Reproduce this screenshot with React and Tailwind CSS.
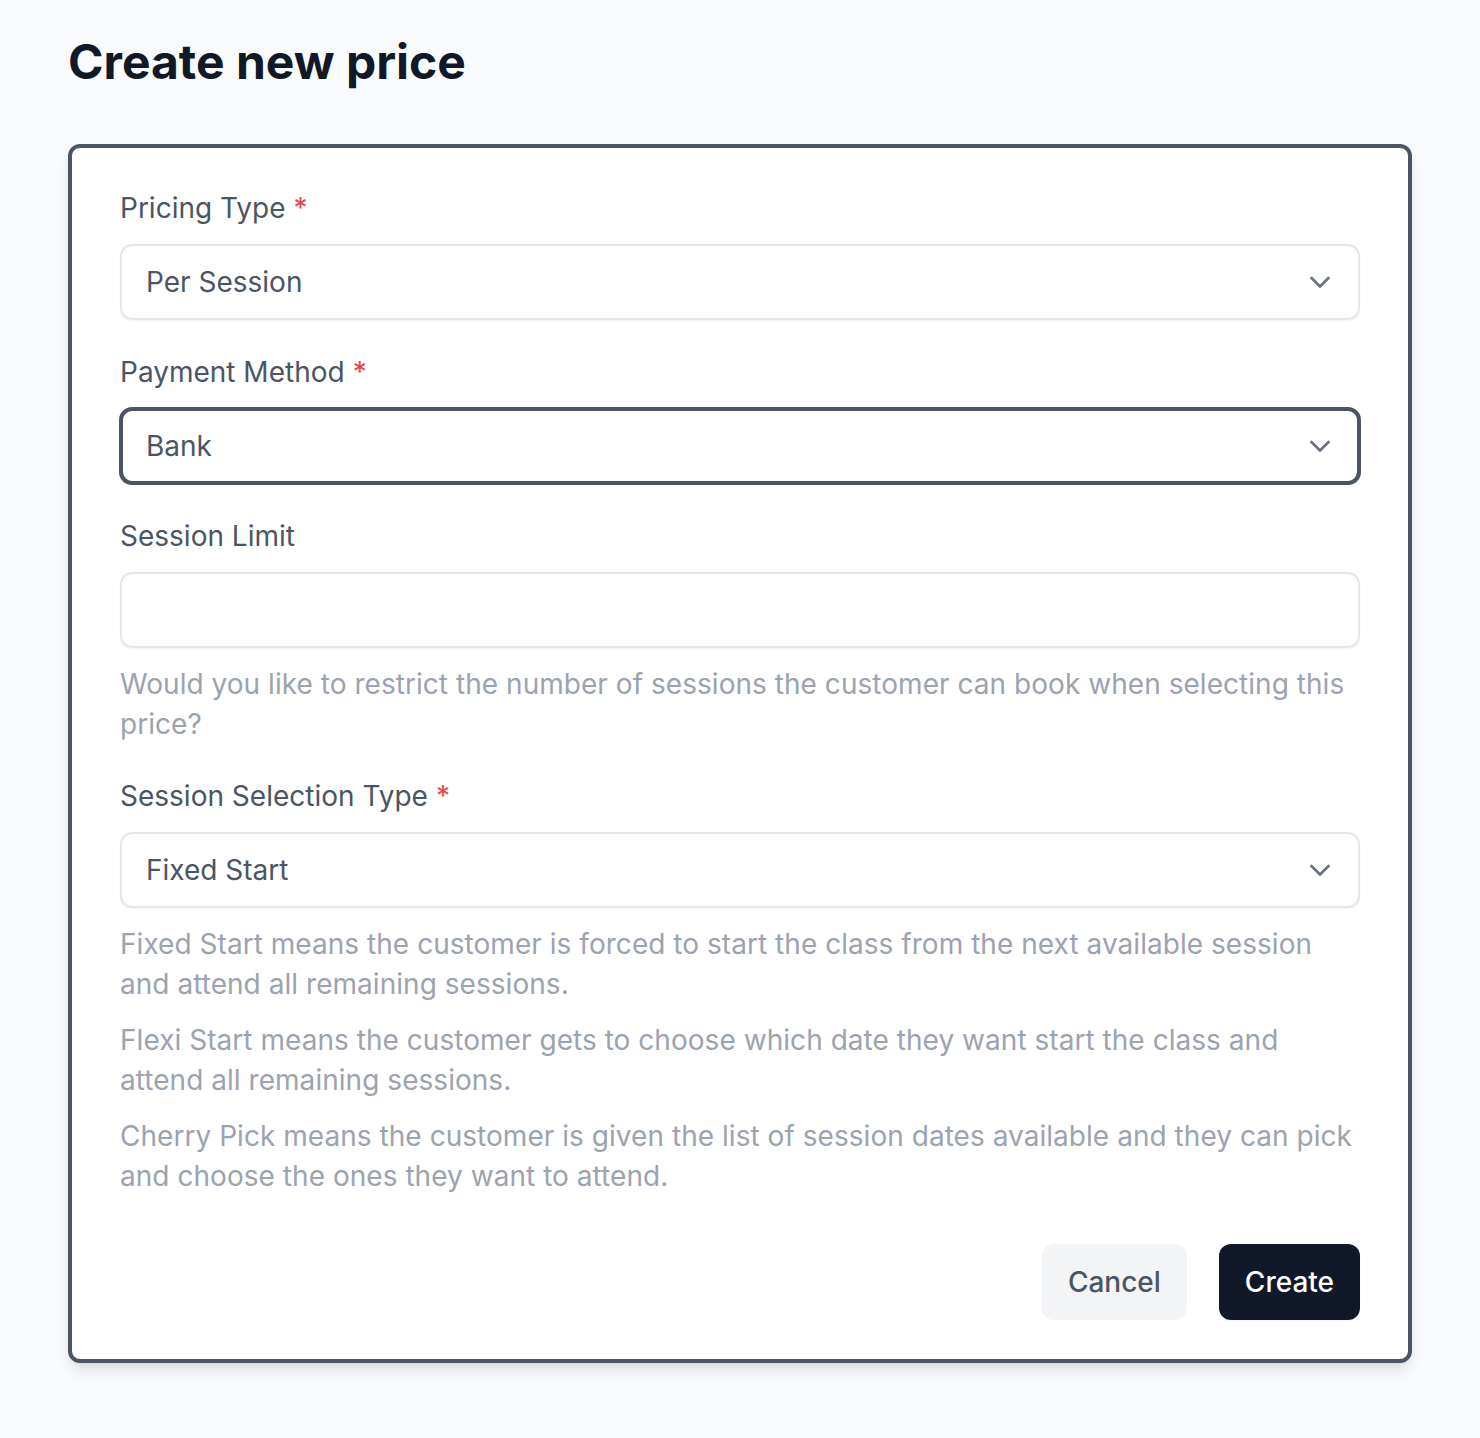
import React from "react";

function Chevron() {
  return (
    <svg width="22" height="14" viewBox="0 0 22 14" fill="none" className="shrink-0">
      <polyline points="2.5,3 11,11.5 19.5,3" stroke="#6b7280" strokeWidth="2.8" strokeLinecap="round" strokeLinejoin="round" />
    </svg>
  );
}

function Label({ children, required }) {
  return (
    <div className="text-[28px] leading-[40px] text-[#4b5563]">
      {children}
      {required && <span className="ml-[8px] text-[#ef4444]">*</span>}
    </div>
  );
}

function Select({ value, focused }) {
  return (
    <div
      className={
        focused
          ? "mt-4 h-[76px] flex items-center justify-between rounded-[12px] border-[3px] border-[#4b5563] shadow-[0_0_0_1px_#4b5563] bg-white pl-[23px] pr-[26px]"
          : "mt-4 h-[76px] flex items-center justify-between rounded-[12px] border-2 border-[#e5e7eb] bg-white shadow-[0_1px_2px_rgba(0,0,0,0.05)] pl-[24px] pr-[27px]"
      }
    >
      <span className="text-[28px] leading-[40px] text-[#4b5563]">{value}</span>
      <Chevron />
    </div>
  );
}

function Help({ children, className = "" }) {
  return <p className={"text-[28px] leading-[40px] tracking-[0.04px] text-[#9ca3af] " + className}>{children}</p>;
}

export default function App() {
  return (
    <div className="min-h-[1438px] bg-[#f9fafb] font-['Inter','Noto_Sans',sans-serif] px-[68px] pt-[30px] pb-[60px]">
      <h1 className="text-[48px] leading-[64px] font-bold text-[#111827]">Create new price</h1>
      <div className="mt-[50px] rounded-[12px] border-4 border-[#4b5563] bg-white px-[48px] pt-[40px] pb-[39px] shadow-[0_10px_15px_-3px_rgba(0,0,0,0.1),0_4px_6px_-4px_rgba(0,0,0,0.1)]">
        <div className="flex flex-col">
          <Label required>Pricing Type</Label>
          <Select value="Per Session" />

          <div className="mt-8">
            <Label required>Payment Method</Label>
            <Select value="Bank" focused />
          </div>

          <div className="mt-8">
            <Label>Session Limit</Label>
            <div className="mt-4 h-[76px] rounded-[12px] border-2 border-[#e5e7eb] bg-white shadow-[0_1px_2px_rgba(0,0,0,0.05)]" />
            <Help className="mt-4">
              Would you like to restrict the number of sessions the customer can book when selecting this price?
            </Help>
          </div>

          <div className="mt-8">
            <Label required>Session Selection Type</Label>
            <Select value="Fixed Start" />
            <div className="mt-4 flex flex-col gap-4">
              <Help>
                Fixed Start means the customer is forced to start the class from the next available session and attend all remaining sessions.
              </Help>
              <Help>
                Flexi Start means the customer gets to choose which date they want start the class and attend all remaining sessions.
              </Help>
              <Help>
                Cherry Pick means the customer is given the list of session dates available and they can pick and choose the ones they want to attend.
              </Help>
            </div>
          </div>

          <div className="mt-12 flex justify-end gap-8">
            <button className="h-[76px] rounded-[12px] bg-[#f3f4f6] px-[26px] text-[28px] font-medium text-[#4b5563]">
              Cancel
            </button>
            <button className="h-[76px] rounded-[12px] bg-[#111827] px-[26px] text-[28px] font-medium text-white shadow-[0_1px_2px_rgba(0,0,0,0.05)]">
              Create
            </button>
          </div>
        </div>
      </div>
    </div>
  );
}
